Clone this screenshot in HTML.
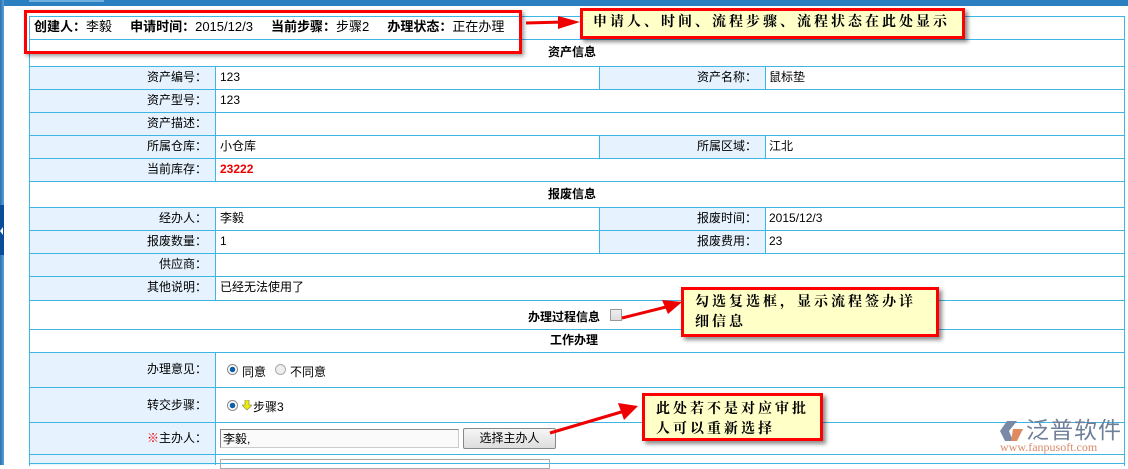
<!DOCTYPE html>
<html><head><meta charset="utf-8"><style>
*{margin:0;padding:0;box-sizing:border-box}
body{width:1128px;height:465px;overflow:hidden;background:#fff;position:relative;font-family:"Liberation Sans","Noto Sans CJK SC","WenQuanYi Zen Hei",sans-serif;font-size:12px;color:#000}
.a{position:absolute}
.hl{position:absolute;left:29px;width:1096px;height:1px;background:#3db6e6}
.vl{position:absolute;width:1px;background:#3db6e6}
.lab{position:absolute;background:#e6f2fd}
.t{position:absolute;white-space:nowrap;line-height:14px}
.r{text-align:right}
.b{font-weight:bold}
.note{position:absolute;background:#ffffc8;border:3px solid #f00;box-shadow:3px 3px 4px rgba(0,0,0,.45);font-weight:bold;font-size:14px;letter-spacing:3px;font-family:"Liberation Serif","Noto Serif CJK SC",serif}
</style></head><body>
<div class="a" style="left:0;top:0;width:1128px;height:6px;background:#2a7fc0"></div>
<div class="a" style="left:29px;top:0;width:75px;height:2px;background:#6fb0e0"></div>
<div class="a" style="left:0;top:0;width:4px;height:465px;background:linear-gradient(90deg,#2a6fb0,#5aa0d8)"></div>
<div class="a" style="left:0;top:205px;width:4px;height:50px;background:#0a4b9a"></div>
<div class="a" style="left:0;top:227px;width:0;height:0;border-top:4px solid transparent;border-bottom:4px solid transparent;border-right:3px solid #fff"></div>

<div class="lab" style="left:29px;top:66px;width:186px;height:115px"></div>
<div class="lab" style="left:599px;top:66px;width:166px;height:23px"></div>
<div class="lab" style="left:599px;top:135px;width:166px;height:23px"></div>
<div class="lab" style="left:29px;top:207px;width:186px;height:93px"></div>
<div class="lab" style="left:599px;top:207px;width:166px;height:46px"></div>
<div class="lab" style="left:29px;top:352px;width:186px;height:113px"></div>

<div class="hl" style="top:16px"></div>
<div class="hl" style="top:39px"></div>
<div class="hl" style="top:66px"></div>
<div class="hl" style="top:89px"></div>
<div class="hl" style="top:112px"></div>
<div class="hl" style="top:135px"></div>
<div class="hl" style="top:158px"></div>
<div class="hl" style="top:181px"></div>
<div class="hl" style="top:207px"></div>
<div class="hl" style="top:230px"></div>
<div class="hl" style="top:253px"></div>
<div class="hl" style="top:276px"></div>
<div class="hl" style="top:300px"></div>
<div class="hl" style="top:329px"></div>
<div class="hl" style="top:352px"></div>
<div class="hl" style="top:387px"></div>
<div class="hl" style="top:422px"></div>
<div class="hl" style="top:454px"></div>
<div class="hl" style="top:463px"></div>
<div class="vl" style="left:29px;top:16px;height:450px"></div>
<div class="vl" style="left:1124px;top:16px;height:450px"></div>
<div class="vl" style="left:215px;top:66px;height:115px"></div>
<div class="vl" style="left:215px;top:207px;height:93px"></div>
<div class="vl" style="left:215px;top:352px;height:113px"></div>
<div class="vl" style="left:599px;top:66px;height:23px"></div>
<div class="vl" style="left:599px;top:135px;height:23px"></div>
<div class="vl" style="left:599px;top:207px;height:46px"></div>
<div class="vl" style="left:765px;top:66px;height:23px"></div>
<div class="vl" style="left:765px;top:135px;height:23px"></div>
<div class="vl" style="left:765px;top:207px;height:46px"></div>

<div class="t" style="left:34px;top:20px;font-size:13px"><b>创建人：</b>李毅 &nbsp;&nbsp;&nbsp; <b>申请时间：</b>2015/12/3 &nbsp;&nbsp;&nbsp; <b>当前步骤：</b>步骤2 &nbsp;&nbsp;&nbsp; <b>办理状态：</b>正在办理</div>
<div class="t b" style="left:548px;top:45px">资产信息</div>
<div class="t r" style="left:29px;width:178px;top:70px">资产编号：</div><div class="t" style="left:220px;top:70px">123</div>
<div class="t r" style="left:599px;width:158px;top:70px">资产名称：</div><div class="t" style="left:769px;top:70px">鼠标垫</div>
<div class="t r" style="left:29px;width:178px;top:93px">资产型号：</div><div class="t" style="left:220px;top:93px">123</div>
<div class="t r" style="left:29px;width:178px;top:116px">资产描述：</div>
<div class="t r" style="left:29px;width:178px;top:139px">所属仓库：</div><div class="t" style="left:220px;top:139px">小仓库</div>
<div class="t r" style="left:599px;width:158px;top:139px">所属区域：</div><div class="t" style="left:769px;top:139px">江北</div>
<div class="t r" style="left:29px;width:178px;top:162px">当前库存：</div><div class="t b" style="left:220px;top:162px;color:#e00">23222</div>
<div class="t b" style="left:548px;top:187px">报废信息</div>
<div class="t r" style="left:29px;width:178px;top:211px">经办人：</div><div class="t" style="left:220px;top:211px">李毅</div>
<div class="t r" style="left:599px;width:158px;top:211px">报废时间：</div><div class="t" style="left:769px;top:211px">2015/12/3</div>
<div class="t r" style="left:29px;width:178px;top:234px">报废数量：</div><div class="t" style="left:220px;top:234px">1</div>
<div class="t r" style="left:599px;width:158px;top:234px">报废费用：</div><div class="t" style="left:769px;top:234px">23</div>
<div class="t r" style="left:29px;width:178px;top:257px">供应商：</div>
<div class="t r" style="left:29px;width:178px;top:280px">其他说明：</div><div class="t" style="left:220px;top:280px">已经无法使用了</div>
<div class="t b" style="left:528px;top:310px">办理过程信息</div>
<div class="a" style="left:610px;top:309px;width:12px;height:12px;border:1px solid #999;background:linear-gradient(#eee,#ddd)"></div>
<div class="t b" style="left:550px;top:333px">工作办理</div>
<div class="t r" style="left:29px;width:178px;top:362px">办理意见：</div>
<div class="a" style="left:227px;top:364px;width:11px;height:11px;border-radius:50%;border:1px solid #888;background:radial-gradient(circle,#0b5ea8 0 2.5px,#fff 3px)"></div>
<div class="t" style="left:242px;top:365px">同意</div>
<div class="a" style="left:275px;top:364px;width:11px;height:11px;border-radius:50%;border:1px solid #aaa;background:#eee"></div>
<div class="t" style="left:290px;top:365px">不同意</div>
<div class="t r" style="left:29px;width:178px;top:398px">转交步骤：</div>
<div class="a" style="left:227px;top:400px;width:11px;height:11px;border-radius:50%;border:1px solid #888;background:radial-gradient(circle,#0b5ea8 0 2.5px,#fff 3px)"></div>
<svg class="a" style="left:242px;top:400px" width="10" height="11"><path d="M3 0h4v5h3L5 10 0 5h3z" fill="#ee0" stroke="#996" stroke-width=".8"/></svg>
<div class="t" style="left:253px;top:400px">步骤3</div>
<div class="t r" style="left:29px;width:178px;top:431px"><span style="color:#e00">※</span>主办人：</div>
<div class="a" style="left:220px;top:429px;width:239px;height:19px;border:1px solid #888;border-right-color:#ccc;border-bottom-color:#ccc;background:#fafafa"></div>
<div class="t" style="left:223px;top:432px">李毅,</div>
<div class="a" style="left:463px;top:428px;width:93px;height:21px;border:1px solid #888;border-radius:2px;background:linear-gradient(#f6f6f6,#ddd);text-align:center;line-height:19px">选择主办人</div>
<div class="a" style="left:220px;top:459px;width:330px;height:10px;border:1px solid #aaa"></div>

<div class="a" style="left:24px;top:10px;width:498px;height:44px;border:3px solid #f00;box-shadow:2px 2px 4px rgba(0,0,0,.4)"></div>
<svg class="a" style="left:526px;top:14px" width="56" height="18"><path d="M0 9L38 8" stroke="#e00" stroke-width="3"/><path d="M32 2L54 8 32 15z" fill="#e00"/></svg>
<div class="note" style="left:580px;top:8px;width:385px;height:31px;line-height:24px;padding-left:10px">申请人、时间、流程步骤、流程状态在此处显示</div>
<svg class="a" style="left:620px;top:298px" width="64" height="24"><path d="M2 20L50 8" stroke="#e00" stroke-width="3"/><path d="M42 2L62 4 48 16z" fill="#e00"/></svg>
<div class="note" style="left:681px;top:287px;width:258px;height:50px;line-height:20px;padding:3px 10px 0 11px">勾选复选框，显示流程签办详细信息</div>
<svg class="a" style="left:548px;top:400px" width="92" height="36"><path d="M2 33L80 10" stroke="#e00" stroke-width="3"/><path d="M70 3L90 6 76 20z" fill="#e00"/></svg>
<div class="note" style="left:642px;top:393px;width:181px;height:48px;line-height:20px;padding:4px 10px 0 11px">此处若不是对应审批人可以重新选择</div>

<svg class="a" style="left:999px;top:419px" width="26" height="24"><path d="M8 2h10l-8 10 4 10H6L1 12z" fill="#7a8aa6"/><path d="M14 10h10l-6 12h-6z" fill="#e08a60"/></svg>
<div class="t" style="left:1026px;top:417px;font-size:23px;line-height:26px;color:#6e7f99;letter-spacing:1px">泛普软件</div>
<div class="t" style="left:1000px;top:440px;font-size:12px;color:#d88a6a;font-family:'Liberation Serif',serif">www.fanpusoft.com</div>
</body></html>
